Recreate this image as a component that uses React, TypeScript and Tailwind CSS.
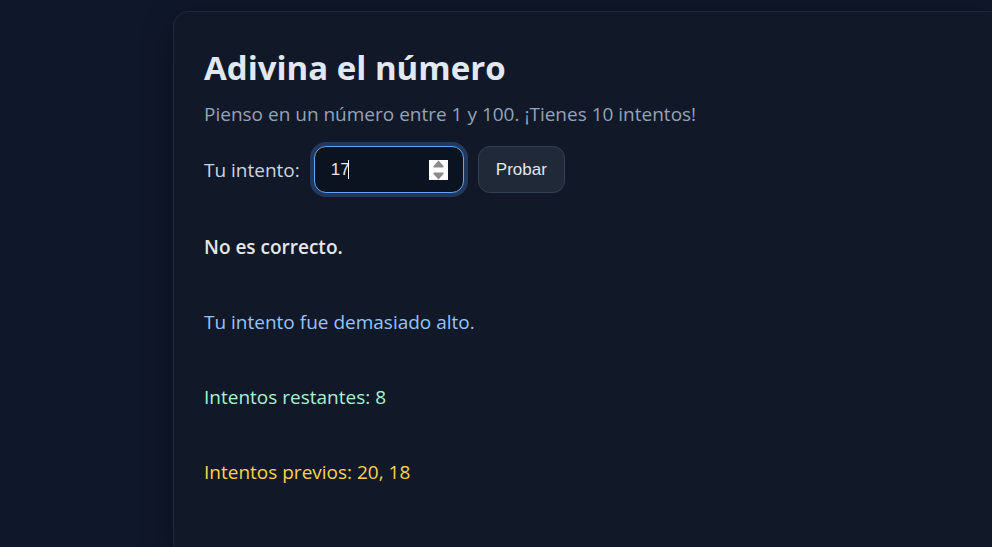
import { useRef, useState } from "react";

export default function App() {
  const [guess, setGuess] = useState("17");
  const inputRef = useRef<HTMLInputElement>(null);

  const step = (amount: number) => {
    setGuess((value) => String(Math.min(100, Math.max(1, Number(value) + amount))));
    inputRef.current?.focus();
  };

  return (
    <div className="h-screen overflow-hidden bg-[#0f172a] pt-[11px] pl-[173px] font-['Open_Sans','Noto_Sans',sans-serif] text-[19px] leading-7 text-[#e5e7eb]">
      <main className="rounded-l-2xl border border-r-0 border-[#1f2937] bg-[#111827] px-[30px] pt-9 pb-[72px] shadow-[0_10px_30px_rgba(0,0,0,0.35)]">
        <h1 className="text-[33px] leading-10 font-bold text-[#e2e8f0]">Adivina el número</h1>
        <p className="mt-3 text-[#94a3b8]">Pienso en un número entre 1 y 100. ¡Tienes 10 intentos!</p>

        <form className="mt-[18px] flex items-center gap-[14px]" onSubmit={(event) => event.preventDefault()}>
          <label htmlFor="guess" className="text-[#cbd5e1]">
            Tu intento:
          </label>
          <div className="relative">
            <input
              id="guess"
              ref={inputRef}
              type="number"
              min={1}
              max={100}
              value={guess}
              onChange={(event) => setGuess(event.target.value)}
              className="block h-[47px] w-[150px] appearance-none rounded-xl border border-[#60a5fa] bg-[#0b1220] px-4 font-['Liberation_Sans',Arial,sans-serif] text-[17px] text-[#e5e7eb] caret-transparent ring-4 ring-[#21395f] outline-none [-moz-appearance:textfield] [&::-webkit-inner-spin-button]:appearance-none"
            />
            <span className="pointer-events-none absolute top-[14px] left-[34px] h-[19px] w-px bg-white" />
            <div className="absolute top-[14px] right-4 flex h-5 w-[19px] flex-col bg-white">
              <button type="button" aria-label="Aumentar" onClick={() => step(1)} className="flex h-[10px] items-start justify-center">
                <svg width="11" height="8" viewBox="0 0 11 8" fill="#8b8b8b">
                  <path d="M5.5 0.5L10.5 6V7.5H0.5V6Z" />
                </svg>
              </button>
              <button type="button" aria-label="Disminuir" onClick={() => step(-1)} className="flex h-[10px] items-end justify-center">
                <svg width="11" height="8" viewBox="0 0 11 8" fill="#8b8b8b">
                  <path d="M0.5 0.5H10.5V2L5.5 7.5L0.5 2Z" />
                </svg>
              </button>
            </div>
          </div>
          <button
            type="submit"
            className="h-[47px] rounded-xl border border-[#334155] bg-[#1f2937] px-[17px] font-['Liberation_Sans',Arial,sans-serif] text-[17px] text-[#e5e7eb]"
          >
            Probar
          </button>
        </form>

        <div className="mt-10 flex flex-col gap-[47px]">
          <p className="font-semibold">No es correcto.</p>
          <p className="text-[#93c5fd]">Tu intento fue demasiado alto.</p>
          <p className="text-[#a7f3d0]">Intentos restantes: 8</p>
          <p className="text-[#fcd34d]">Intentos previos: 20, 18</p>
        </div>
      </main>
    </div>
  );
}
